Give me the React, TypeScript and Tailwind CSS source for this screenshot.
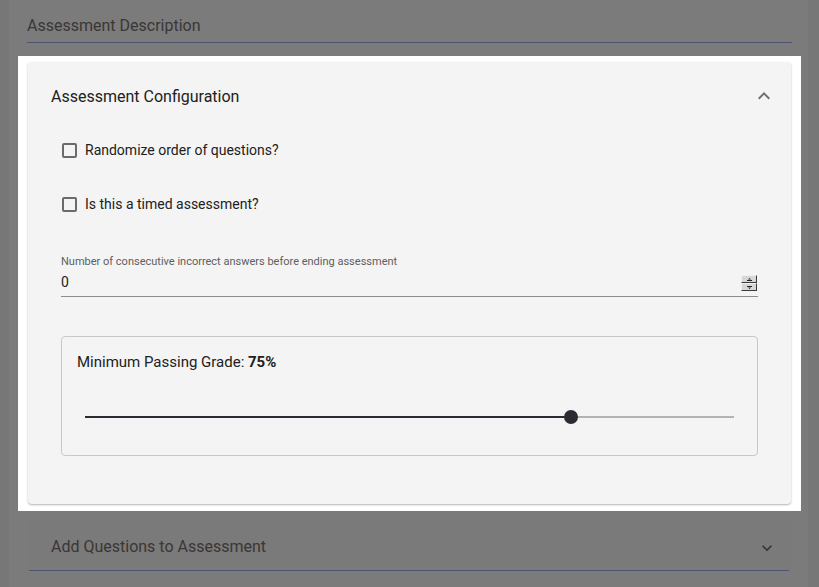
function ExpandIcon({ up, className }: { up?: boolean; className?: string }) {
  return (
    <svg viewBox="0 0 24 24" className={`${className ?? ""} ${up ? "rotate-180" : ""}`} fill="currentColor">
      <path d="M16.59 8.59 12 13.17 7.41 8.59 6 10l6 6 6-6z" />
    </svg>
  );
}

function Checkbox({ label }: { label: string }) {
  return (
    <label className="flex items-center h-[40px] gap-[8px]">
      <span className="ml-px w-[15px] h-[15px] border-2 border-[#6b6b6b] rounded-[2px] bg-transparent" />
      <span className="text-[14px] leading-5 text-[#212121]">{label}</span>
    </label>
  );
}

function Spinner() {
  return (
    <div className="flex flex-col w-[16px] h-[16px] mb-[1px]">
      {[true, false].map((up) => (
        <div
          key={String(up)}
          className="flex-1 flex items-center justify-center bg-[#d6d6d6] border-t border-l border-t-[#f0f0f0] border-l-[#f0f0f0] border-b border-r border-b-[#3a3a3a] border-r-[#3a3a3a]"
        >
          <svg width="5" height="3" viewBox="0 0 5 3">
            {up ? (
              <>
                <path d="M2.5 0 L4 1.5 L1 1.5 Z" fill="#222" />
                <rect x="0" y="2" width="5" height="1" fill="#222" />
              </>
            ) : (
              <>
                <rect x="0" y="0" width="5" height="1" fill="#222" />
                <path d="M1 1.5 L4 1.5 L2.5 3 Z" fill="#222" />
              </>
            )}
          </svg>
        </div>
      ))}
    </div>
  );
}

export default function App() {
  const grade = 75;

  return (
    <div className="min-h-[587px] w-[819px] bg-[#eeeeee] overflow-hidden font-['Roboto',sans-serif]">
      <div className="ml-[9px] w-[799px] min-h-[587px] bg-[#f7f7f7] pl-[19px] pr-[17px] pt-[14px]">
        {/* description field */}
        <div className="-mx-px border-b border-[#9aa9e4] pb-[4px]">
          <p className="text-[16px] leading-6 text-[#746e6e]">Assessment Description</p>
        </div>

        {/* highlighted step */}
        <div className="relative z-10 mt-[13px] -mx-[10px] bg-white px-[10px] pt-[6px] pb-[7px] shadow-[0_0_0_2000px_rgba(0,0,0,0.5)]">
          <div className="bg-[#f4f4f4] rounded-[4px] shadow-[0_1px_2px_rgba(0,0,0,0.3)]">
            <div className="flex items-center justify-between h-[68px] pt-[2px] pl-[23px] pr-[15px]">
              <h2 className="text-[16px] leading-6 text-[#212121]">Assessment Configuration</h2>
              <ExpandIcon up className="w-6 h-6 -mt-[2px] text-[#6f6f6f]" />
            </div>

            <div className="px-[33px] pb-[48px]">
              <Checkbox label="Randomize order of questions?" />
              <div className="mt-[14px]">
                <Checkbox label="Is this a timed assessment?" />
              </div>

              <div className="mt-[31px]">
                <p className="text-[11px] leading-[14px] text-[#5e5e5e]">
                  Number of consecutive incorrect answers before ending assessment
                </p>
                <div className="mt-[3px] flex items-end justify-between border-b border-[#8c8c8c] pb-[4px] pr-px">
                  <span className="text-[14px] leading-5 text-[#212121]">0</span>
                  <Spinner />
                </div>
              </div>

              <div className="mt-[39px] h-[120px] border border-[#c8c8c8] rounded-[4px] pl-[15px] pt-[15px]">
                <p className="text-[15px] leading-5 text-[#212121]">
                  Minimum Passing Grade: <span className="font-bold">{grade}%</span>
                </p>
                <div className="mt-[38px] ml-[8px] mr-[23px] relative h-[14px] flex items-center">
                  <div className="h-[2px] w-full bg-[#b3b3b3]" />
                  <div
                    className="absolute left-0 h-[2px] bg-[#2c2b33]"
                    style={{ width: `${grade}%` }}
                  />
                  <div
                    className="absolute w-[14px] h-[14px] -ml-[8px] rounded-full bg-[#2c2b33]"
                    style={{ left: `${grade}%` }}
                  />
                </div>
              </div>
            </div>
          </div>
        </div>

        {/* next section */}
        <div className="mt-[9px] -ml-px bg-[#f4f4f4] rounded-t-[4px] h-[51px] px-[2px] flex flex-col">
          <div className="flex-1 flex items-center justify-between pt-[3px] pl-[22px] pr-[12px] border-b border-[#9aa9e4]">
            <span className="text-[16px] leading-6 text-[#746e6e]">Add Questions to Assessment</span>
            <ExpandIcon className="w-5 h-5 mt-[2px] text-[#66667a]" />
          </div>
        </div>
      </div>
    </div>
  );
}
